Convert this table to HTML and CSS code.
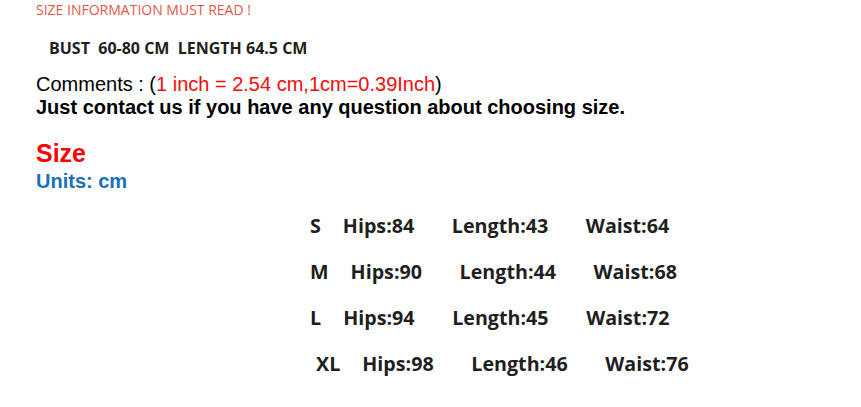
FILE: index.html
```html
<!DOCTYPE html>
<html>
<head>
<meta charset="utf-8">
<link rel="stylesheet" href="styles.css">
</head>
<body>
<div class="page">
  <p class="notice">SIZE INFORMATION MUST READ !</p>
  <p class="bust">BUST&nbsp; 60-80 CM&nbsp; LENGTH 64.5 CM</p>
  <p class="comments">Comments : (<span class="red">1 inch = 2.54 cm,1cm=0.39Inch</span>)</p>
  <p class="contact">Just contact us if you have any question about choosing size.</p>
  <h2 class="size-title">Size</h2>
  <p class="units">Units: cm</p>
  <div class="size-table">
    <div class="size-row">
      <span class="label">S</span><span class="hips">Hips:84</span><span class="length">Length:43</span><span class="waist">Waist:64</span>
    </div>
    <div class="size-row">
      <span class="label">M</span><span class="hips">Hips:90</span><span class="length">Length:44</span><span class="waist">Waist:68</span>
    </div>
    <div class="size-row">
      <span class="label">L</span><span class="hips">Hips:94</span><span class="length">Length:45</span><span class="waist">Waist:72</span>
    </div>
    <div class="size-row size-row--shift">
      <span class="label">XL</span><span class="hips">Hips:98</span><span class="length">Length:46</span><span class="waist">Waist:76</span>
    </div>
  </div>
</div>
</body>
</html>
```

FILE: styles.css
```css
* { box-sizing: border-box; }
html, body { margin: 0; padding: 0; background: #fff; }
.page {
  padding-left: 36px;
  width: 861px;
}
p, h2 { margin: 0; }

.notice {
  font-family: "Open Sans", sans-serif;
  font-size: 14px;
  line-height: 18px;
  color: #e0584e;
  padding-top: 1px;
}
.bust {
  font-family: "Open Sans", sans-serif;
  font-weight: 700;
  font-size: 16px;
  line-height: 20px;
  color: #1f1f1f;
  margin-top: 19px;
  padding-left: 13px;
}
.comments {
  font-family: "Liberation Sans", Arial, sans-serif;
  font-size: 20px;
  line-height: 23px;
  color: #000;
  margin-top: 15px;
}
.red { color: #f40d0d; }
.contact {
  font-family: "Liberation Sans", Arial, sans-serif;
  font-weight: 700;
  font-size: 20px;
  line-height: 23px;
  color: #000;
}
.size-title {
  font-family: "Liberation Sans", Arial, sans-serif;
  font-weight: 700;
  font-size: 25px;
  line-height: 28px;
  color: #ff0000;
  margin-top: 20px;
}
.units {
  font-family: "Liberation Sans", Arial, sans-serif;
  font-weight: 700;
  font-size: 20px;
  line-height: 22px;
  color: #1a70b8;
  margin-top: 3px;
}
.size-table {
  padding-left: 274px;
  margin-top: 20px;
  font-family: "Open Sans", sans-serif;
  font-weight: 700;
  font-size: 19.7px;
  color: #1f1f1f;
}
.size-row {
  display: flex;
  height: 46px;
  line-height: 28px;
  align-items: flex-start;
}
.size-row--shift { padding-left: 6px; }
.label { margin-right: 22px; }
.hips { width: 109px; }
.length { width: 134px; }
```
